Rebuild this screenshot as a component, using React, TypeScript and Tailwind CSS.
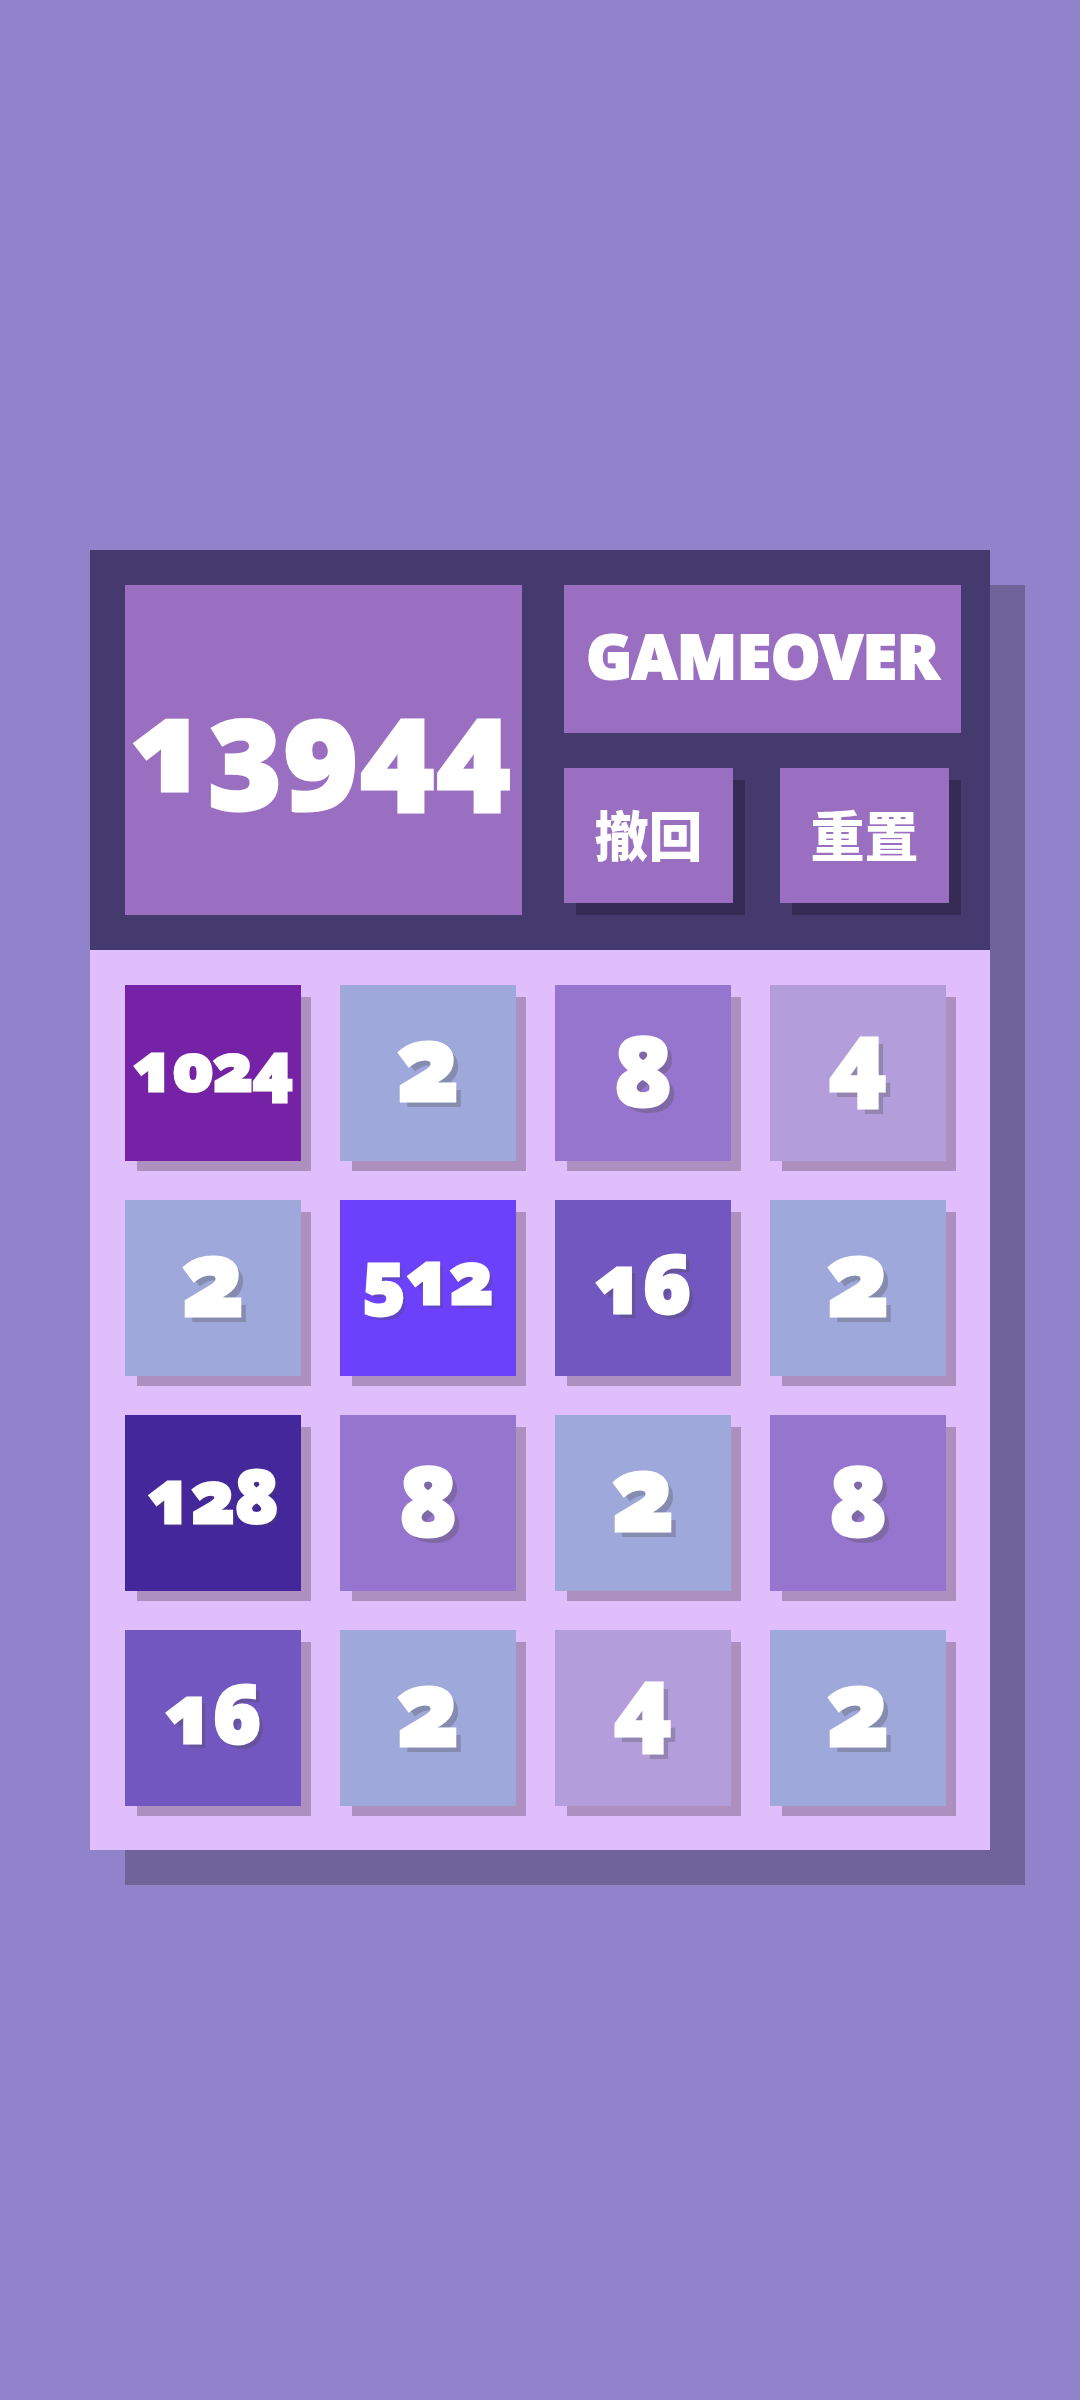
type Tile = 2 | 4 | 8 | 16 | 128 | 512 | 1024;

const board: Tile[] = [
  1024, 2, 8, 4,
  2, 512, 16, 2,
  128, 8, 2, 8,
  16, 2, 4, 2,
];

// Bottom padding balances the oldstyle figures, which rise or drop differently.
const tileStyles: Record<Tile, string> = {
  2: "bg-[#9fa8da] pb-6 text-[104px] [text-shadow:6px_6px_0_#4b4b4b4d]",
  4: "bg-[#b39ddb] pb-9 text-[96px] [text-shadow:6px_6px_0_#4b4b4b4d]",
  8: "bg-[#9575cd] pb-2 text-[96px] [text-shadow:6px_6px_0_#4b4b4b4d]",
  16: "bg-[#7357c0] pb-3 text-[80px] [text-shadow:5px_5px_0_#4b4b4b4d]",
  128: "bg-[#45279c] pb-4 text-[72px] [text-shadow:3px_3px_0_#4b4b4b4d]",
  512: "bg-[#6c41fb] pb-6 text-[72px] [text-shadow:4px_4px_0_#4b4b4b4d]",
  1024: "bg-[#7622a6] pb-4 text-[66px] [text-shadow:2px_2px_0_#4b4b4b4d]",
};

function ActionButton({ label }: { label: string }) {
  return (
    <button
      type="button"
      className='flex h-[135px] items-center justify-center bg-[#9a6ec1] pb-1 font-["Noto_Sans_CJK_SC",sans-serif] text-[54px] leading-none font-black shadow-[12px_12px_0_0_#352b55]'
    >
      {label}
    </button>
  );
}

export default function App() {
  return (
    <main className='flex min-h-screen items-center justify-center bg-[#9083cb] font-["Noto_Sans",sans-serif] font-black text-white oldstyle-nums [-webkit-text-stroke:3px_white]'>
      <div className="w-5/6 shadow-[35px_35px_0_0_#6f639a]">
        <header className="grid grid-cols-2 gap-[42px] bg-[#443a6e] py-[35px] pr-[29px] pl-[35px]">
          <output
            aria-label="Score"
            className="flex items-center justify-center bg-[#9a6ec1] pr-1 pb-4 text-[126px] leading-none"
          >
            13944
          </output>
          <div className="flex flex-col gap-[35px] pb-3">
            <p className="flex h-[148px] items-center justify-center bg-[#9a6ec1] pb-2 text-[62px] leading-none [-webkit-text-stroke:2px_white]">
              GAMEOVER
            </p>
            <div className="grid grid-cols-2 gap-[47px] pr-3 [-webkit-text-stroke:0px]">
              <ActionButton label="撤回" />
              <ActionButton label="重置" />
            </div>
          </div>
        </header>
        <section
          aria-label="Board"
          className="grid grid-cols-4 gap-[39px] bg-[#e0befb] pt-[35px] pr-11 pb-11 pl-[35px]"
        >
          {board.map((value, index) => (
            <div
              key={index}
              className={`flex aspect-square min-w-0 items-center justify-center leading-none shadow-[11px_11px_0_-1px_#ad90bf] ${tileStyles[value]}`}
            >
              {value}
            </div>
          ))}
        </section>
      </div>
    </main>
  );
}
